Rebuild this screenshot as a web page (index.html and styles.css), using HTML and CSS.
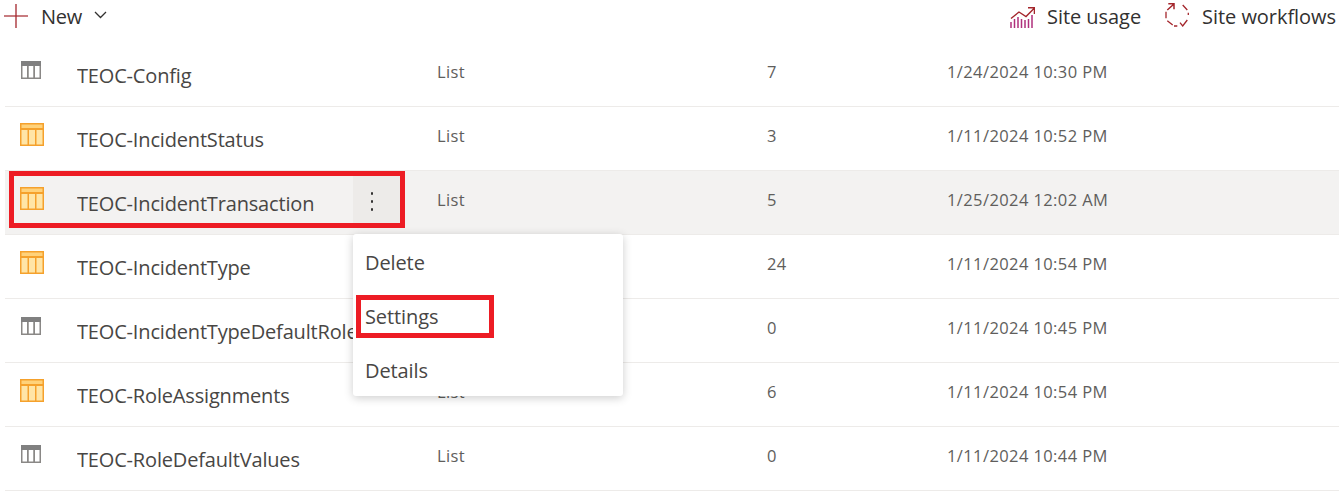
FILE: index.html
```html
<!DOCTYPE html>
<html lang="en">
<head>
    <title>Site contents</title>
    <link rel="stylesheet" href="styles.css">
</head>
<body>
    <div class="toolbar">
        <div class="toolbar-left">
            <svg class="plus-icon" width="24" height="24" viewBox="0 0 24 24">
                <path d="M0 12H24" stroke="#a4262c" stroke-width="1.2"/>
                <path d="M12 0V24" stroke="#a4262c" stroke-width="1.3"/>
            </svg>
            <span class="new-label">New</span>
            <svg class="chevron" width="13" height="8" viewBox="0 0 13 8">
                <path d="M1 1L6.500 6.500L12 1" fill="none" stroke="#323130" stroke-width="1.3"/>
            </svg>
        </div>
        <div class="toolbar-right">
            <div class="tool">
                <svg class="usage-icon" width="25" height="21" viewBox="0 0 25 21">
                    <path d="M1 21V15M4.500 21V12M8 21V10M11.500 21V12M15 21V13M18.500 21V12M22 21V8" stroke="#b0307c" stroke-width="1.500"/>
                    <path d="M1 11.500L9 5L16 9.500L24 1.500M18 .8H24.400V7" fill="none" stroke="#a4262c" stroke-width="1.400"/>
                </svg>
                <span class="tool-label">Site usage</span>
            </div>
            <div class="tool">
                <svg class="workflow-icon" width="25" height="24" viewBox="0 0 25 24">
                    <path d="M3.300 .8H9V6.300M2.300 7L9 1" fill="none" stroke="#a4262c" stroke-width="1.500"/>
                    <path d="M1 8.700V15.300M2.300 17.700L7.700 22M9 23H12.300M15 19.700L17.700 23L22.300 17M23.300 9.700V12M17.700 2L22.300 7" fill="none" stroke="#a4262c" stroke-width="1.300"/>
                </svg>
                <span class="tool-label">Site workflows</span>
            </div>
        </div>
    </div>

    <div class="list">
        <div class="row">
            <svg class="list-icon grey"><use href="#grey-table"/></svg>
            <div class="name">TEOC-Config</div>
            <div class="cell type">List</div>
            <div class="cell count">7</div>
            <div class="cell date">1/24/2024 10:30 PM</div>
        </div>
        <div class="row">
            <svg class="list-icon"><use href="#orange-table"/></svg>
            <div class="name">TEOC-IncidentStatus</div>
            <div class="cell type">List</div>
            <div class="cell count">3</div>
            <div class="cell date">1/11/2024 10:52 PM</div>
        </div>
        <div class="row row-selected">
            <svg class="list-icon"><use href="#orange-table"/></svg>
            <div class="name">TEOC-IncidentTransaction</div>
            <div class="more-button">
                <span class="dot"></span><span class="dot"></span><span class="dot"></span>
            </div>
            <div class="cell type">List</div>
            <div class="cell count">5</div>
            <div class="cell date">1/25/2024 12:02 AM</div>
            <div class="row-marker"></div>
        </div>
        <div class="row">
            <svg class="list-icon"><use href="#orange-table"/></svg>
            <div class="name">TEOC-IncidentType</div>
            <div class="cell type">List</div>
            <div class="cell count">24</div>
            <div class="cell date">1/11/2024 10:54 PM</div>
        </div>
        <div class="row">
            <svg class="list-icon grey"><use href="#grey-table"/></svg>
            <div class="name">TEOC-IncidentTypeDefaultRoles</div>
            <div class="cell type">List</div>
            <div class="cell count">0</div>
            <div class="cell date">1/11/2024 10:45 PM</div>
        </div>
        <div class="row">
            <svg class="list-icon"><use href="#orange-table"/></svg>
            <div class="name">TEOC-RoleAssignments</div>
            <div class="cell type">List</div>
            <div class="cell count">6</div>
            <div class="cell date">1/11/2024 10:54 PM</div>
        </div>
        <div class="row">
            <svg class="list-icon grey"><use href="#grey-table"/></svg>
            <div class="name">TEOC-RoleDefaultValues</div>
            <div class="cell type">List</div>
            <div class="cell count">0</div>
            <div class="cell date">1/11/2024 10:44 PM</div>
        </div>
    </div>

    <div class="menu">
        <div class="menu-item">Delete</div>
        <div class="menu-item">Settings<div class="settings-marker"></div></div>
        <div class="menu-item">Details</div>
    </div>

    <svg class="icon-defs" width="0" height="0">
        <symbol id="grey-table" viewBox="0 0 20 18">
            <rect x="0" y="0" width="20" height="18" fill="#8a8886"/>
            <rect x="0" y="0" width="20" height="5" fill="#808080"/>
            <rect x="1.500" y="5" width="4.500" height="11.500" fill="#fff"/>
            <rect x="7.750" y="5" width="4.500" height="11.500" fill="#fff"/>
            <rect x="14" y="5" width="4.500" height="11.500" fill="#fff"/>
        </symbol>
        <symbol id="orange-table" viewBox="0 0 24 23">
            <rect x="0" y="0" width="24" height="23" fill="#f5a12c"/>
            <rect x="1.500" y="1.500" width="21" height="3.500" fill="#ffd27a"/>
            <rect x="1.500" y="7" width="6" height="14.500" fill="#ffe5a6"/>
            <rect x="9" y="7" width="6" height="14.500" fill="#ffe5a6"/>
            <rect x="16.500" y="7" width="6" height="14.500" fill="#ffe5a6"/>
        </symbol>
    </svg>
</body>
</html>
```

FILE: styles.css
```css
body {
    margin: 0;
    height: 493px;
    overflow: hidden;
    position: relative;
    background-color: #fff;
    font-family: "Open Sans", "Noto Sans", sans-serif;
    color: #323130;
}
.toolbar {
    height: 43px;
    display: flex;
    justify-content: space-between;
    align-items: flex-start;
    padding: 0 3px 0 4px;
}
.toolbar-left {
    display: flex;
    align-items: center;
    height: 34px;
}
.plus-icon {
    margin-bottom: 3px;
}
.new-label {
    font-size: 20px;
    margin-left: 13px;
    margin-bottom: 2px;
    letter-spacing: -0.3px;
}
.chevron {
    margin-left: 12px;
    margin-bottom: 4px;
}
.toolbar-right {
    display: flex;
    height: 34px;
    gap: 24px;
}
.tool {
    display: flex;
    align-items: center;
    gap: 12px;
    font-size: 20px;
    letter-spacing: -0.05px;
}
.tool-label {
    margin-bottom: 2px;
}
.workflow-icon {
    margin-bottom: 4px;
}
.list {
    margin-left: 5px;
}
.row {
    position: relative;
    height: 63px;
    border-bottom: 1px solid #edebe9;
    display: grid;
    grid-template-columns: 72px 360px 330px 180px 1fr;
    align-items: center;
}
.row-selected {
    background-color: #f3f2f1;
    grid-template-columns: 72px 276px 84px 330px 180px 1fr;
}
.list-icon {
    width: 24px;
    height: 23px;
    margin-left: 15px;
    margin-top: -8px;
}
.list-icon.grey {
    width: 20px;
    height: 18px;
    margin-left: 16px;
    margin-top: -9px;
}
.name {
    font-size: 20px;
    letter-spacing: -0.17px;
    color: #484644;
    white-space: nowrap;
    overflow: hidden;
    margin-top: 1px;
}
.cell {
    font-size: 16.500px;
    letter-spacing: 0.4px;
    color: #605e5c;
    margin-top: -6px;
}
.more-button {
    width: 47px;
    height: 55px;
    box-sizing: border-box;
    padding: 6px 9px 0 0;
    margin-top: -8px;
    background-color: #edebe9;
    display: flex;
    flex-direction: column;
    align-items: center;
    justify-content: center;
    gap: 5.500px;
}
.dot {
    width: 2.500px;
    height: 2.500px;
    border-radius: 50%;
    background-color: #323130;
}
.row-marker {
    position: absolute;
    left: 4px;
    top: 0;
    width: 386px;
    height: 47px;
    border: 5px solid #ed1c24;
}
.menu {
    position: absolute;
    left: 353px;
    top: 234px;
    width: 270px;
    height: 162px;
    background-color: #fff;
    border-radius: 3px;
    box-shadow: 0 2px 10px rgba(0, 0, 0, 0.2);
}
.menu-item {
    position: relative;
    height: 54px;
    line-height: 58px;
    padding-left: 12px;
    font-size: 20px;
    letter-spacing: -0.1px;
    color: #484644;
}
.settings-marker {
    position: absolute;
    left: 3px;
    top: 7px;
    width: 128px;
    height: 33px;
    border: 5px solid #ed1c24;
}
.icon-defs {
    position: absolute;
}
```
